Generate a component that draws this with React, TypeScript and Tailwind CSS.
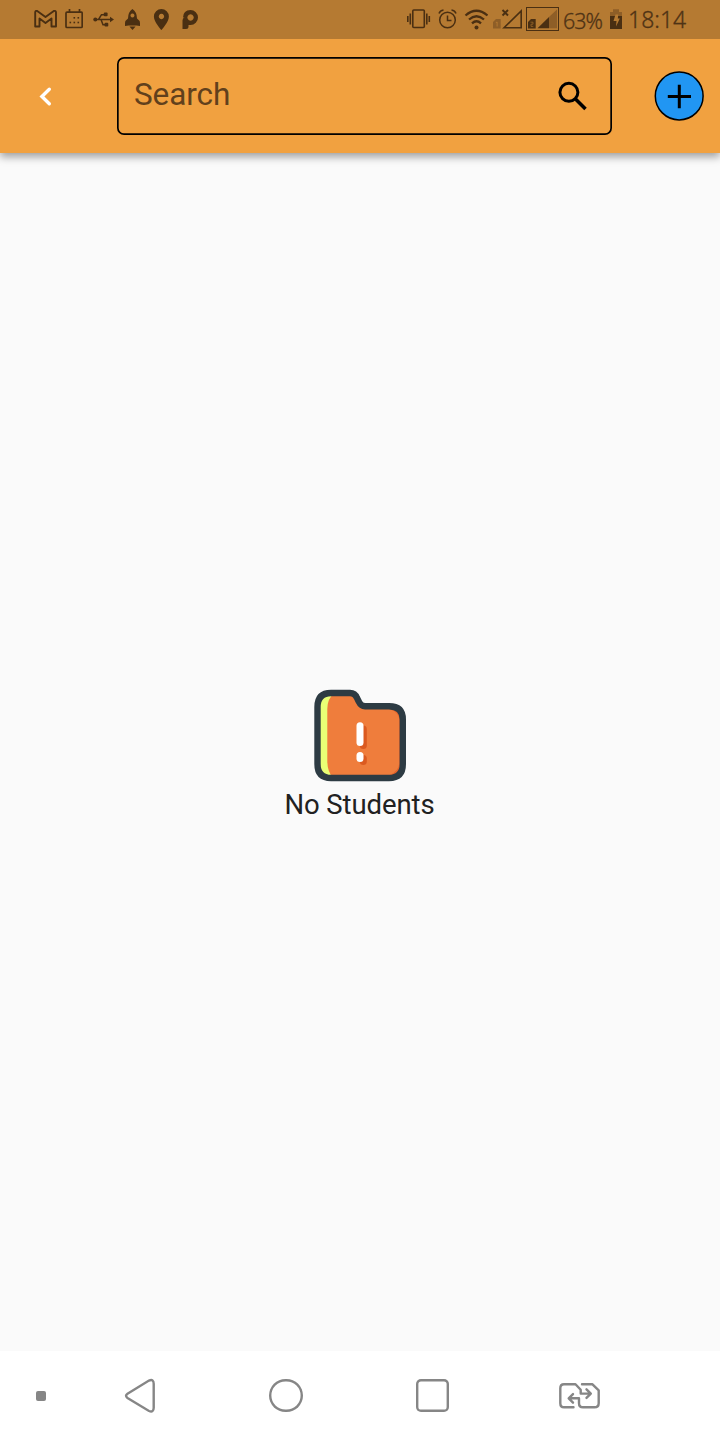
import React from "react";

const INK = "#4a2f12";

function LeftStatusIcons() {
  return (
    <div className="flex items-center">
      {/* Mail */}
      <svg className="mr-[7px] h-[39px] w-6" viewBox="34 0 24 39" fill="none" stroke={INK} strokeWidth="1.9" strokeLinejoin="round">
        <path d="M35.200 26.500V12.500Q35.200 10.300 37.200 11L45.500 17L53.800 11Q56 10.300 56 12.500V26.500H51.500V18.500L45.500 23L39.500 18.500V26.500Z" />
      </svg>
      {/* Calendar */}
      <svg className="mr-[9px] h-[39px] w-[18px]" viewBox="65 0 18 39" fill="none" stroke={INK} strokeWidth="1.7">
        <rect x="66" y="12.2" width="16.200" height="15.300" rx="1" />
        <path d="M69.500 9v4M79.500 9v4" />
        <g fill={INK} stroke="none">
          <rect x="73.500" y="17" width="1.600" height="1.600" />
          <rect x="77.500" y="17" width="1.600" height="1.600" />
          <rect x="69.500" y="21.700" width="1.600" height="1.600" />
          <rect x="73.500" y="21.700" width="1.600" height="1.600" />
          <rect x="77.500" y="21.700" width="1.600" height="1.600" />
        </g>
      </svg>
      {/* USB */}
      <svg className="mr-2.5 h-[39px] w-[22px]" viewBox="92 0 22 39" fill={INK}>
        <circle cx="95.300" cy="19.500" r="2" />
        <path d="M110 16.700l4 2.800-4 2.800z" />
        <rect x="103.800" y="12.500" width="3.800" height="3.800" rx="1" />
        <rect x="104.500" y="22.800" width="3.800" height="3.800" rx="1" />
        <path d="M95 19.500h15M98.500 19.500l3-4.800h3M101 19.500l2 5.200h3" fill="none" stroke={INK} strokeWidth="1.500" />
      </svg>
      {/* Rocket */}
      <svg className="mr-3 h-[39px] w-[17px]" viewBox="124 0 17 39" fill={INK}>
        <path fillRule="evenodd" d="M132.400 9Q137 12 137 18.500Q140 20.500 140 23V26L136.500 25.500H128.500L125 26V23Q125 20.500 128 18.500Q128 12 132.400 9ZM132.400 13.500a2 2 0 1 0 .1 0Z" />
        <path d="M129.500 26.500h6l-1 1.200-2 2.300-2-2.300z" />
      </svg>
      {/* Map pin */}
      <svg className="mr-3 h-[39px] w-4" viewBox="153 0 16 39" fill={INK}>
        <path fillRule="evenodd" d="M161.400 9a7.500 7.500 0 0 1 7.500 7.500c0 5.500-7.500 13.500-7.500 13.500s-7.500-8-7.500-13.500A7.500 7.500 0 0 1 161.400 9Zm0 4.800a2.700 2.700 0 1 0 .1 0Z" />
      </svg>
      {/* Parking app */}
      <svg className="h-[39px] w-[18px]" viewBox="181 0 18 39" fill={INK}>
        <path fillRule="evenodd" d="M183 17.500Q183.300 10 190.500 10A7.500 7.500 0 0 1 190.500 25H188.500V26.500Q188.500 29 186 29H182.500V20.500Q182.500 18 184.500 17.500ZM190.500 14.300a3.200 3.200 0 1 0 .1 0Z" />
      </svg>
    </div>
  );
}

function RightStatusIcons() {
  return (
    <div className="flex items-center text-[#4f3315]">
      {/* Vibrate */}
      <svg className="mr-[7px] h-[39px] w-6" viewBox="407 0 24 39" fill="none" stroke={INK} strokeWidth="1.600">
        <rect x="412.800" y="10" width="11.500" height="17.500" rx="1" />
        <path d="M410.300 13.500v11M407.800 16v6M426.800 13.500v11M429.300 16v6" />
      </svg>
      {/* Alarm */}
      <svg className="mr-[7px] h-[39px] w-[19px]" viewBox="438 0 19 39" fill="none" stroke={INK} strokeWidth="1.500">
        <circle cx="447.500" cy="20" r="7.800" />
        <path d="M447.500 15.500v5h4M439 13.500q1-3 4.500-3.500M456 13.500q-1-3-4.500-3.500" />
      </svg>
      {/* Wifi */}
      <svg className="mr-1 h-[39px] w-6" viewBox="464.500 0 24 39" fill="none" stroke={INK} strokeWidth="2.300">
        <path d="M466 15.500q11-9.500 22 0M469.500 19.500q7.500-6.500 15 0M472.500 23.300q4.500-4 9 0" />
        <circle cx="477" cy="27.500" r="2" fill={INK} stroke="none" />
      </svg>
      {/* First SIM without signal */}
      <svg className="mr-[3px] h-[39px] w-[31px]" viewBox="492 0 31 39" fill="none" stroke={INK} strokeWidth="1.600">
        <path d="M496 19H500.700v9.500h-7.700V22Z" fill="#8e5e27" stroke="none" />
        <path d="M495.800 22.700l1.300-.7v4.500" stroke="#b57a32" strokeWidth=".9" />
        <path d="M502.500 10l5.500 5.500m0-5.500l-5.500 5.500" strokeWidth="1.900" />
        <path d="M504 27.700L521.200 11v16.700Z" />
      </svg>
      {/* Second SIM */}
      <svg className="mr-1 h-[39px] w-[33px]" viewBox="526 0 33 39" fill={INK}>
        <rect x="526.500" y="7.500" width="32" height="23" fill="none" stroke={INK} />
        <path d="M531 19H535.700v9.500h-7.700V22Z" />
        <path d="M530.500 22.200h2.500v2h-2v2.200h2.300" fill="none" stroke="#a56e2c" strokeWidth=".7" />
        <path d="M537.500 28.300L549 17v11.300Z" />
        <path d="M549 17L557 9.500v18.800h-8Z" fill="#8e5e27" />
      </svg>
      <span className="w-[47px] pt-0.5 font-['Noto_Sans'] text-[21.500px] font-light leading-[38px] tracking-[-1px] [-webkit-text-stroke:0.3px_#4f3315]">63%</span>
      {/* Battery */}
      <svg className="mr-1.5 h-[39px] w-3" viewBox="610 0 12 39" fill={INK}>
        <path d="M610 16V12h3V9.300h6V12h3v4Z" fill="#8e5e27" />
        <path d="M610 16h12v13h-12z" />
        <path d="M615.500 14.500h2.800l-.5 4h2l-3.800 8 .5-5.500h-3z" fill="#b57a32" />
      </svg>
      <span className="w-[59px] font-['Noto_Sans'] text-[23px] font-light leading-[39px] [-webkit-text-stroke:0.3px_#4f3315]">18:14</span>
    </div>
  );
}

function AppBar() {
  return (
    <header className="z-10 flex h-[114px] shrink-0 items-start bg-[#f1a140] pt-[18px] shadow-[0_4px_8px_rgba(0,0,0,0.36)]">
      <button className="flex h-[78px] w-[117px] items-center pl-[37px]" aria-label="Back">
        <svg className="h-6 w-4" viewBox="37 84 16 24" fill="none" stroke="#fff" strokeWidth="3.400" strokeLinecap="round" strokeLinejoin="miter">
          <path d="M49.300 89.300L41.900 96.500L49.300 103.700" />
        </svg>
      </button>
      <div className="flex h-[78px] w-[495px] items-center justify-between rounded-[7px] pl-[17px] pr-6 shadow-[inset_0_0_0_1.700px_#000]">
        <span className="pb-0.5 font-['Roboto'] text-[31.500px] leading-9 tracking-[-0.1px] text-[#61401c]">Search</span>
        <svg className="h-8 w-8" viewBox="556 80 32 32" fill="none" stroke="#000" strokeWidth="3">
          <circle cx="568.900" cy="92.300" r="9" />
          <path d="M575.500 99L585.500 109" strokeWidth="3.600" />
        </svg>
      </div>
      <button className="ml-[42px] flex h-[78px] items-center" aria-label="Add">
        <svg className="h-[50px] w-[50px]" viewBox="0 0 50 50">
          <circle cx="25.200" cy="25" r="23.900" fill="#2196f3" stroke="#000" strokeWidth="1.500" />
          <path d="M25.300 13.800v23.400M13.800 25.500h23.200" stroke="#000" strokeWidth="3" />
        </svg>
      </button>
    </header>
  );
}

function EmptyState() {
  return (
    <main className="flex grow flex-col items-center bg-[#fafafa] pt-[535px]">
      <svg className="h-[96px] w-[96px]" viewBox="312 688 96 96">
        <defs>
          <clipPath id="folder">
            <path d="M331 693H350Q355 693 357 698L359 702Q361 706.300 365 706.300H389Q402.800 706.300 402.800 719.500V764Q402.800 778 389 778H331Q317.500 778 317.500 764V707Q317.500 693 331 693Z" />
          </clipPath>
        </defs>
        <g clipPath="url(#folder)">
          <rect x="315" y="690" width="90" height="90" fill="#e9ff75" />
          <path d="M340 690Q327.300 695 327.300 709V761Q327.300 773 335 780H408V690Z" fill="#ef7d3c" />
          <path d="M391 709.500Q399.500 713 399.300 721V763Q399 771 389 775.500H402V709Z" fill="#e5642b" />
        </g>
        <path d="M331 693H350Q355 693 357 698L359 702Q361 706.300 365 706.300H389Q402.800 706.300 402.800 719.500V764Q402.800 778 389 778H331Q317.500 778 317.500 764V707Q317.500 693 331 693Z" fill="none" stroke="#2d3b43" strokeWidth="6.400" />
        <g fill="#db5a20">
          <rect x="359.800" y="725.500" width="7" height="23.500" rx="3.500" />
          <rect x="359.800" y="755" width="7" height="10" rx="3.500" />
        </g>
        <g fill="#fff">
          <rect x="356.500" y="722.300" width="7" height="23.700" rx="3.500" />
          <rect x="356.500" y="752" width="7" height="10" rx="3.500" />
        </g>
      </svg>
      <p className="mr-px mt-[5px] font-['Roboto'] text-[27.500px] leading-8 tracking-[-0.1px] text-[#212121]">No Students</p>
    </main>
  );
}

function NavigationBar() {
  return (
    <nav className="flex h-[89px] shrink-0 items-center bg-white pl-9">
      <span className="h-2.5 w-2.5 rounded-[2px] bg-[#868686]" />
      <svg className="ml-[77px] h-9 w-[34px]" viewBox="123 1377.500 34 36" fill="none" stroke="#868686" strokeWidth="2.400">
        <path d="M127.500 1393.200L149 1380.100Q153.700 1378.100 153.700 1383.300V1407.300Q153.700 1412.300 149 1410.500L127.500 1397.400Q124.500 1395.300 127.500 1393.200Z" />
      </svg>
      <span className="ml-28 h-[33px] w-[34px] rounded-full shadow-[inset_0_0_0_2.400px_#868686]" />
      <span className="ml-[113px] h-[33px] w-[33px] rounded-[5px] shadow-[inset_0_0_0_2.400px_#868686]" />
      <svg className="ml-[109px] h-7 w-[42px]" viewBox="558 1381.700 42 28" fill="none" stroke="#868686" strokeWidth="2.400" strokeLinejoin="round" strokeLinecap="round">
        <path d="M573.500 1407H564Q560.300 1407 560.300 1403V1388Q560.300 1384 564 1384H575.500L580.700 1389.500V1393.300H590M586.500 1389L590.800 1393.300L586.500 1397.600" />
        <path d="M582 1384H592.500L598.700 1390V1403Q598.700 1407 594.500 1407H583Q579 1407 579 1403V1398H569M573 1393.800L568.700 1398.100L573 1402.400" />
      </svg>
    </nav>
  );
}

export default function App() {
  return (
    <div className="flex h-[1440px] w-[720px] flex-col overflow-hidden">
      <div className="z-20 flex h-[39px] shrink-0 items-center justify-between bg-[#b57a32] pl-[34px] pr-[33px]">
        <LeftStatusIcons />
        <RightStatusIcons />
      </div>
      <AppBar />
      <EmptyState />
      <NavigationBar />
    </div>
  );
}
